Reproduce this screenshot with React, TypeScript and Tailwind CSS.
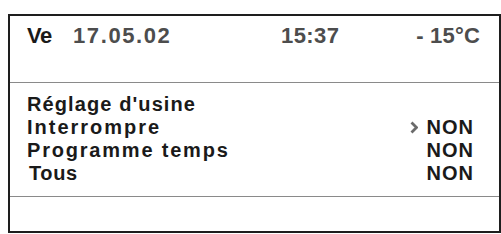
export default function App() {
    const rows = [
        { label: "Interrompre", value: "NON", active: true, track: "tracking-[2px]" },
        { label: "Programme temps", value: "NON", active: false, track: "tracking-[1.8px]" },
        { label: "Tous", value: "NON", active: false, track: "tracking-[0.6px] pl-[2px]" },
    ]

    return (
        <div className="w-[501px] h-[234px] bg-white pl-[8px] pt-[14px] font-['Liberation_Sans',Arial,sans-serif] font-bold">
            <div className="w-[493px] h-[219px] border-2 border-[#1e1e1e] flex flex-col">
                <div className="h-[67px] border-b border-[#8a8a8a] pt-[8px] pl-[17px] pr-[19px] flex items-start text-[22px] leading-[24px]">
                    <span className="w-[46px] text-[#1a1a1a] tracking-[-0.5px]">Ve</span>
                    <span className="w-[208px] text-[#4d4d4d] tracking-[1.6px]">17.05.02</span>
                    <span className="text-[#4d4d4d] tracking-[0.4px]">15:37</span>
                    <span className="ml-auto text-[#4d4d4d] tracking-[0.2px]">- 15°C</span>
                </div>
                <div className="h-[114px] border-b border-[#8a8a8a] pt-[10px] pl-[17px] pr-[25px] text-[20px] leading-[23px] text-[#1a1a1a]">
                    <div className="tracking-[1.1px]">Réglage d'usine</div>
                    {rows.map(row => (
                        <div key={row.label} className="flex items-center justify-between">
                            <span className={row.track}>{row.label}</span>
                            <span className="flex items-center tracking-[1px]">
                                {row.active && (
                                    <svg width="8" height="13" viewBox="0 0 8 13" className="mr-[9px]">
                                        <polyline points="1.5,1.5 6.5,6.5 1.5,11.5" fill="none" stroke="#6b6b6b" strokeWidth="2.8" />
                                    </svg>
                                )}
                                <span>{row.value}</span>
                            </span>
                        </div>
                    ))}
                </div>
                <div className="flex-1" />
            </div>
        </div>
    )
}
